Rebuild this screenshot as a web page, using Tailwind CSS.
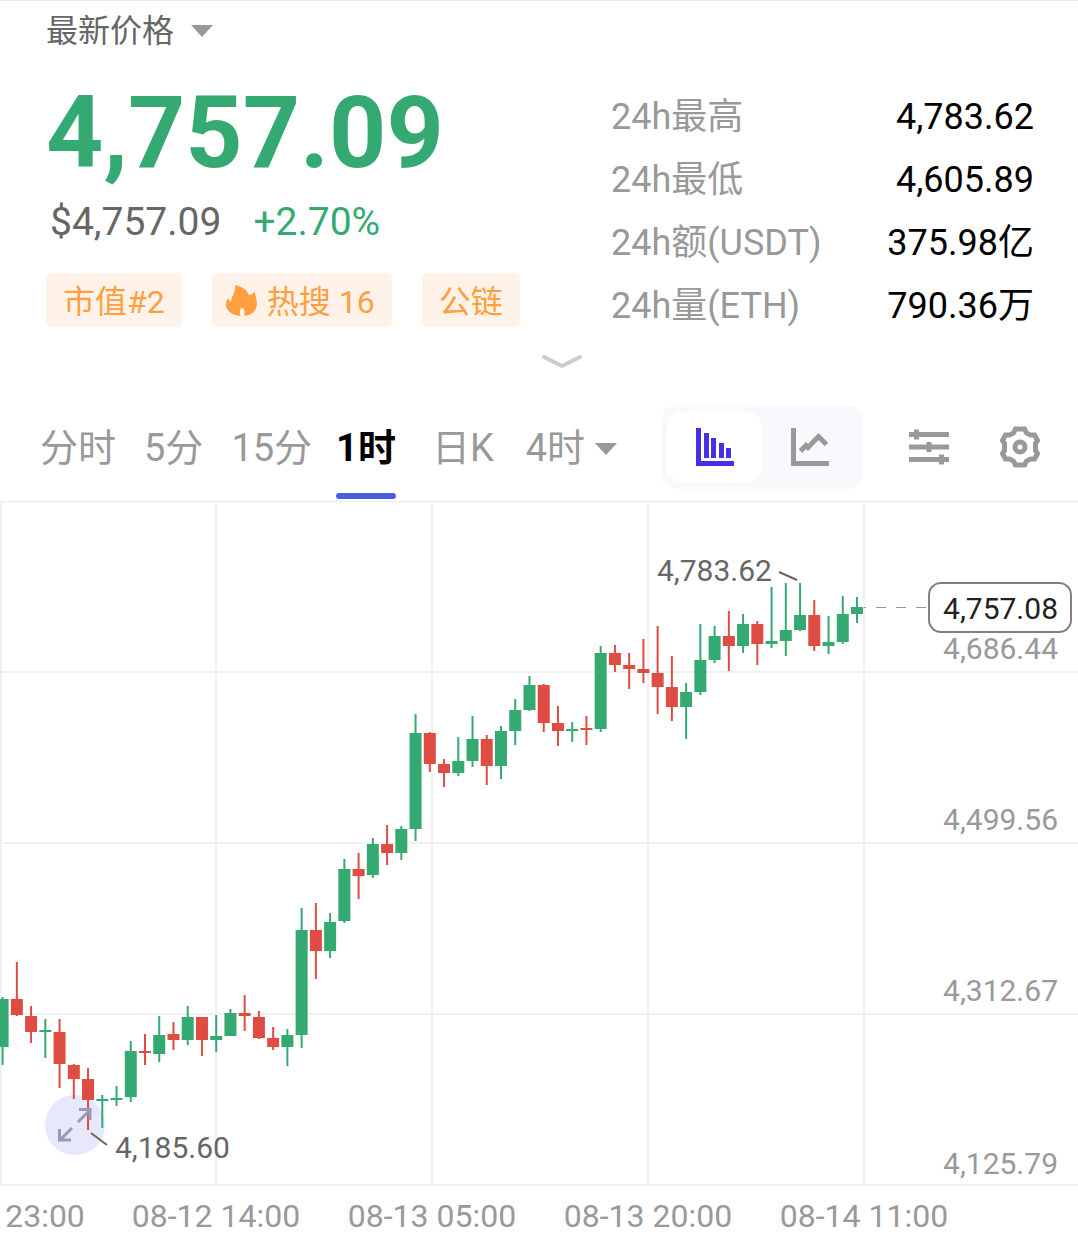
<!DOCTYPE html>
<html lang="zh-CN">
<head>
    <meta charset="UTF-8">
    <meta name="viewport" content="width=device-width, initial-scale=1.0">
    <title>ETH 行情</title>
    <script src="https://cdn.jsdelivr.net/npm/@tailwindcss/browser@4"></script>
</head>
<body class="bg-white font-[Roboto,'Noto_Sans_CJK_SC',sans-serif] text-[#666]">
    <header class="border-t border-[#e8e8e8] pl-[46px] pr-11 flex justify-between">
        <div>
            <div class="mt-2 h-11 flex items-center gap-4">
                <select id="price_type" aria-label="价格类型" class="appearance-none text-[32px] leading-[46px]">
                    <option>最新价格</option>
                    <option>指数价格</option>
                </select>
                <svg class="w-[22px] h-3" viewBox="0 0 22 12" fill="#999"><path d="M0 0H22L11 12Z"/></svg>
            </div>
            <h1 class="mt-7 text-[100px] leading-[104px] font-bold text-[#34aa72]">4,757.09</h1>
            <div class="mt-3 pl-1 flex gap-8 text-[39px] leading-[50px]">
                <p>$4,757.09</p>
                <p class="text-[#34aa72]">+2.70%</p>
            </div>
            <div class="mt-[26px] flex gap-[30px] text-[32px] leading-[50px] text-[#ff9f40]">
                <span class="pt-1 px-[17px] rounded-md bg-[#fff2e9]">市值#2</span>
                <span class="pt-1 pl-[14px] pr-[17px] rounded-md bg-[#fff2e9] flex items-center gap-[10px]">
                    <svg class="mb-1 w-[31px] h-[31px]" viewBox="0 0 30 30" fill="#ff9f40"><path d="M9 0C16 2 21 5 22 10C25 9 27 8 28 6C28 11 30 14 30 18C30 24 26 29 18 30C18 26 18 23 16 22C13 23 13 26 14 30C6 29 0 25 0 19C0 16 1 14 2 13C3 15 4 16 5 16C5 11 9 8 9 0Z"/></svg>
                    热搜 16
                </span>
                <span class="pt-1 px-[17px] rounded-md bg-[#fff2e9]">公链</span>
            </div>
        </div>
        <dl class="mt-[85px] w-[423px] grid grid-cols-[auto_auto] justify-between content-start text-4xl leading-[63px]">
            <dt class="text-[#999]">24h最高</dt>
            <dd class="text-right text-black">4,783.62</dd>
            <dt class="text-[#999]">24h最低</dt>
            <dd class="text-right text-black">4,605.89</dd>
            <dt class="text-[#999]">24h额(USDT)</dt>
            <dd class="text-right text-black">375.98亿</dd>
            <dt class="text-[#999]">24h量(ETH)</dt>
            <dd class="text-right text-black">790.36万</dd>
        </dl>
    </header>
    <div class="pl-[46px] h-[55px] flex justify-center">
        <button aria-label="展开" class="w-10 h-12 flex items-center justify-center">
            <svg class="w-10 h-[14px]" viewBox="0 0 40 14" fill="none" stroke="#ccc" stroke-width="4" stroke-linecap="round" stroke-linejoin="round"><path d="M2 2L20 11L38 2"/></svg>
        </button>
    </div>
    <nav class="pl-10 pr-[38px] h-[107px] flex justify-between items-start">
        <div class="pt-1 flex h-full gap-7 text-[38px] text-[#999]">
            <button>分时</button>
            <button>5分</button>
            <button>15分</button>
            <button class="-ml-1 mr-1 relative text-black font-bold">1时<span class="absolute inset-x-0 bottom-px h-[6px] rounded-full bg-[#4a5fdf]"></span></button>
            <button class="mx-1">日K</button>
            <div class="flex items-center gap-2">
                <select id="period" aria-label="周期" class="appearance-none">
                    <option>4时</option>
                    <option>6时</option>
                </select>
                <svg class="w-6 h-3" viewBox="0 0 24 13" fill="#999"><path d="M0 0H24L12 13Z"/></svg>
            </div>
        </div>
        <div class="mt-3 flex items-center text-[#999]">
            <div class="w-[202px] h-[84px] p-[6px] flex rounded-2xl bg-[#f7f9fd]">
                <button aria-label="K线图" class="flex-1 flex items-center justify-center rounded-2xl bg-white text-[#4531e3]">
                    <svg class="w-[38px] h-[38px]" viewBox="0 0 38 38" fill="currentColor"><path d="M0 0H5V33H38V38H0ZM8 5H13V30H8ZM15 10H20V30H15ZM23 15H28V30H23ZM30 20H35V30H30Z"/></svg>
                </button>
                <button aria-label="折线图" class="flex-1 flex items-center justify-center">
                    <svg class="w-[38px] h-[38px]" viewBox="0 0 38 38" fill="none" stroke="currentColor" stroke-width="5"><path d="M2.500 0V35.500H38M9.500 23L15 17.500L17 19.500L27.500 8.500L35.500 16.500"/></svg>
                </button>
            </div>
            <button aria-label="指标" class="ml-[46px]">
                <svg class="w-10 h-9" viewBox="0 0 40 35" fill="none" stroke="currentColor" stroke-width="5"><path d="M0 5H40M0 17.500H40M0 30H40M7.500 0V10M20 12.500V22.500M32.500 25V35"/></svg>
            </button>
            <button aria-label="设置" class="ml-[51px]">
                <svg class="w-10 h-[42px]" viewBox="0 0 40 42" fill="none" stroke="currentColor" stroke-width="5"><circle cx="20" cy="21" r="5"/><path d="M15.500 3H24.500L26.500 7L30.500 9L34.500 9L37.500 14.500L35.500 17.500V24.500L37.500 27.500L34.500 33L30.500 33L26.500 35L24.500 39H15.500L13.500 35L9.500 33L5.500 33L2.500 27.500L4.500 24.500V17.500L2.500 14.500L5.500 9L9.500 9L13.500 7Z"/></svg>
            </button>
        </div>
    </nav>
    <main>
        <svg class="w-full h-auto" viewBox="0 0 1078 746" font-size="30" fill="#999">
            <path d="M0 1.500H1078M0 172H1078M0 343H1078M0 514H1078M0 685H1078M1 1V685M216 1V685M432 1V685M648 1V685M864 1V685" stroke="#f0f0f2" stroke-width="2"/>
            <circle cx="75" cy="625" r="30" fill="#e8e8fc"/>
            <g id="candles"></g>
            <path d="M78 622L90 610M79 609.500H90V620M72 628L60 640M59.500 629V640H71" fill="none" stroke="#9499bd" stroke-width="3"/>
            <path d="M779 72L797 80M91 633L107 645" stroke="#666" stroke-width="2"/>
            <path d="M864 107.500H928" stroke="#999" stroke-dasharray="10 10" stroke-dashoffset="8"/>
            <g fill="#666">
                <text x="657" y="81">4,783.62</text>
                <text x="115" y="658">4,185.60</text>
            </g>
            <g text-anchor="end">
                <text x="1058" y="159">4,686.44</text>
                <text x="1058" y="330">4,499.56</text>
                <text x="1058" y="501">4,312.67</text>
                <text x="1058" y="674">4,125.79</text>
            </g>
            <rect x="929" y="83" width="142" height="49" rx="12" fill="#fff" stroke="#808080" stroke-width="2"/>
            <text x="1058" y="119" text-anchor="end" fill="#222">4,757.08</text>
            <g text-anchor="middle" font-size="32">
                <text x="45" y="727">23:00</text>
                <text x="216" y="727">08-12 14:00</text>
                <text x="432" y="727">08-13 05:00</text>
                <text x="648" y="727">08-13 20:00</text>
                <text x="864" y="727">08-14 11:00</text>
            </g>
        </svg>
    </main>
    <script>
        // high, body top, body bottom, low, 1 = up / 0 = down
        const data = [
            [497, 499, 547, 565, 1], [462, 499, 515, 516, 0], [506, 516, 532, 543, 0], [519, 530, 532, 558, 1],
            [519, 532, 564, 588, 0], [564, 565, 579, 599, 0], [568, 579, 600, 630, 0], [595, 599, 601, 628, 1],
            [586, 598, 600, 606, 1], [541, 551, 597, 602, 1], [534, 551, 553, 565, 0], [516, 535, 554, 562, 1],
            [522, 534, 540, 550, 0], [506, 517, 540, 545, 1], [517, 517, 540, 556, 0], [515, 536, 540, 552, 1],
            [509, 513, 536, 536, 1], [495, 513, 516, 531, 0], [511, 517, 538, 539, 0], [527, 538, 547, 550, 0],
            [529, 535, 547, 566, 1], [408, 430, 535, 548, 1], [403, 430, 451, 479, 0], [413, 422, 451, 458, 1],
            [359, 369, 421, 423, 1], [353, 369, 376, 399, 0], [338, 344, 375, 378, 1], [325, 344, 353, 365, 0],
            [326, 329, 353, 360, 1], [214, 233, 329, 341, 1], [232, 233, 264, 272, 0], [259, 264, 273, 287, 0],
            [237, 261, 273, 276, 1], [216, 239, 261, 267, 1], [235, 239, 266, 285, 0], [226, 231, 266, 279, 1],
            [199, 210, 231, 245, 1], [176, 185, 210, 211, 1], [184, 185, 223, 232, 0], [206, 223, 231, 246, 0],
            [222, 229, 231, 242, 1], [216, 228, 230, 245, 0], [146, 153, 229, 232, 1], [145, 153, 165, 172, 0],
            [153, 165, 169, 189, 0], [139, 169, 173, 183, 0], [126, 173, 187, 214, 0], [156, 187, 207, 221, 0],
            [183, 192, 207, 239, 1], [124, 160, 192, 195, 1], [126, 136, 160, 163, 1], [111, 136, 146, 171, 0],
            [114, 124, 146, 153, 1], [121, 124, 144, 165, 0], [87, 141, 144, 148, 1], [83, 130, 141, 156, 1],
            [83, 115, 130, 131, 1], [100, 115, 146, 151, 0], [116, 142, 146, 154, 1], [96, 114, 142, 144, 1],
            [97, 107, 114, 123, 1]
        ];
        const step = 14.24;
        document.getElementById("candles").innerHTML = data.map(([high, top, bottom, low, up], i) => {
            const x = 2.6 + i * step;
            return `<g fill="${up ? "#34aa72" : "#df4c43"}">
                <rect x="${x - 1}" y="${high}" width="2" height="${low - high}"/>
                <rect x="${x - 6}" y="${top}" width="12" height="${bottom - top}"/>
            </g>`;
        }).join("");
    </script>
</body>
</html>
